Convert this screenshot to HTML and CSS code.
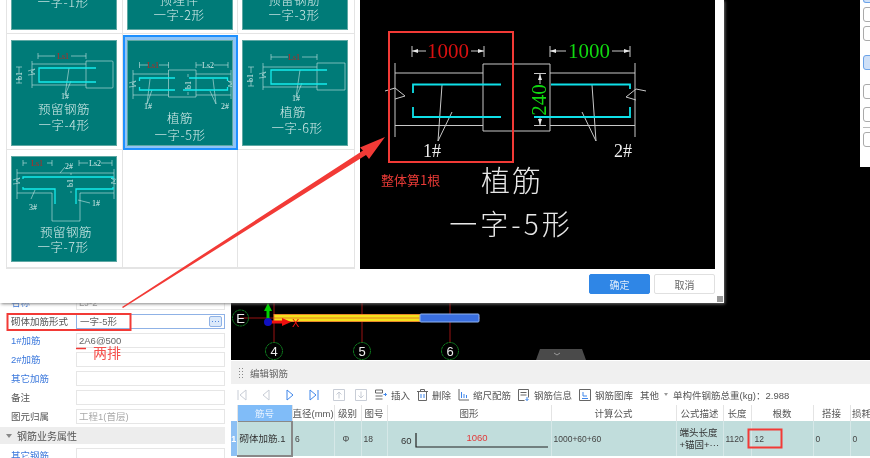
FILE: index.html
```html
<!DOCTYPE html>
<html lang="zh-CN">
<head>
    <meta charset="UTF-8">
    <title>编辑钢筋</title>
    <link rel="stylesheet" href="styles.css">
</head>
<body>
<div class="app">
    <!-- property list on the left -->
    <aside class="props">
        <div class="prop"><span class="prop-label link">名称</span><div class="prop-value">LJ-2</div></div>
        <div class="prop"><span class="prop-label">砌体加筋形式</span><div class="prop-value active">一字-5形<span class="more">···</span></div></div>
        <div class="prop"><span class="prop-label link">1#加筋</span><div class="prop-value dark">2A6@500</div></div>
        <div class="prop"><span class="prop-label link">2#加筋</span><div class="prop-value"></div></div>
        <div class="prop"><span class="prop-label link">其它加筋</span><div class="prop-value"></div></div>
        <div class="prop"><span class="prop-label">备注</span><div class="prop-value"></div></div>
        <div class="prop"><span class="prop-label">图元归属</span><div class="prop-value muted">工程1(首层)</div></div>
        <div class="prop-section"><span class="caret"></span>钢筋业务属性</div>
        <div class="prop"><span class="prop-label link">其它钢筋</span><div class="prop-value"></div></div>
    </aside>

    <main class="work">
        <div class="canvas">
            <svg class="canvas-svg" width="639" height="360" viewBox="0 0 639 360">
                <g class="grid-line">
                    <path d="M43 303V343M131 303V343M219 303V343M9 318H249"/>
                </g>
                <rect x="43" y="314.500" width="146" height="7" fill="#f4e21c" stroke="#e8862a" stroke-width="1"/>
                <path d="M43 318H189" stroke="#e0402a" stroke-width=".6"/>
                <rect x="189" y="314" width="59" height="8" rx="1" fill="#3a6fe0" stroke="#8fb4f2" stroke-width="1"/>
                <g class="axis-ring">
                    <circle cx="9.500" cy="318" r="8"/>
                    <circle cx="43" cy="351" r="8.500"/>
                    <circle cx="131" cy="351" r="8.500"/>
                    <circle cx="219" cy="351" r="8.500"/>
                </g>
                <g class="axis-label">
                    <text x="9.500" y="323">E</text>
                    <text x="43" y="356">4</text>
                    <text x="131" y="356">5</text>
                    <text x="219" y="356">6</text>
                </g>
                <path d="M37 322V310" stroke="#00d000" stroke-width="3"/>
                <path d="M37 303l-4 8h8z" fill="#00d000"/>
                <path d="M37 322H52" stroke="#f01010" stroke-width="3"/>
                <path d="M60 322l-9-4v8z" fill="#f01010"/>
                <circle cx="37" cy="322" r="4" fill="#1010c0"/>
                <text class="axis-x" x="61" y="327">X</text>
                <path d="M305 360l4-11h42l4 11z" fill="#4a4a4a"/>
                <path d="M323 353l3 2 3-2" fill="none" stroke="#999" stroke-width="1"/>
            </svg>
            <div class="side-tools">
                <span class="tool fill cut"></span>
                <span class="tool near"></span>
                <span class="tool near"></span>
                <span class="tool fill far"></span>
                <span class="tool far"></span>
                <span class="tool mid"></span>
                <span class="sep"></span>
                <span class="tool near"></span>
            </div>
        </div>

        <section class="rebar">
            <div class="rebar-title"><span class="grip"></span>编辑钢筋</div>
            <div class="toolbar">
                <svg class="nav" width="10" height="12" viewBox="0 0 10 12"><path d="M1 1V11M9 1L3 6l6 5z"/></svg>
                <svg class="nav" width="10" height="12" viewBox="0 0 10 12"><path d="M8 1L2 6l6 5z"/></svg>
                <svg class="nav blue" width="10" height="12" viewBox="0 0 10 12"><path d="M2 1l6 5-6 5z"/></svg>
                <svg class="nav blue" width="10" height="12" viewBox="0 0 10 12"><path d="M9 1V11M1 1l6 5-6 5z"/></svg>
                <svg class="nav box" width="12" height="12" viewBox="0 0 12 12"><path d="M.5.5h11v11H.5zM6 9.500V3M3.500 5.500L6 3l2.500 2.500"/></svg>
                <svg class="nav box last" width="12" height="12" viewBox="0 0 12 12"><path d="M.5.5h11v11H.5zM6 2.500V9M3.500 6.500L6 9l2.500-2.500"/></svg>
                <span class="action"><svg class="ico" width="12" height="11" viewBox="0 0 12 11"><path d="M.5 1h7v3h-7zM.5 7h7M.5 10h7"/><path class="accent" d="M8.500 5.500h3M10 4l1.500 1.500L10 7"/></svg>插入</span>
                <span class="action"><svg class="ico" width="11" height="12" viewBox="0 0 11 12"><path d="M0 2.500h11M3.500 2.500V.5h4v2M1.500 2.500v9h8v-9"/><path class="accent" d="M4 5v4M7 5v4"/></svg>删除</span>
                <span class="action"><svg class="ico" width="11" height="12" viewBox="0 0 11 12"><path d="M1 0v11h10"/><path class="accent" d="M3.500 3v6M6 5v4M8.500 6v3"/></svg>缩尺配筋</span>
                <span class="action"><svg class="ico" width="12" height="12" viewBox="0 0 12 12"><path d="M.5.5h10v8M.5.500v11h6M2.500 3.500h6M2.500 6h6"/><path class="accent" d="M9 8v3.500M7.500 10L9 11.500 10.500 10"/></svg>钢筋信息</span>
                <span class="action"><svg class="ico" width="12" height="12" viewBox="0 0 12 12"><path d="M.5.5h11v11H.5z"/><path class="accent" d="M3 9.500h6M4 3v4h4"/></svg>钢筋图库</span>
                <span class="action other">其他<span class="drop"></span></span>
                <span class="weight">单构件钢筋总重(kg)：2.988</span>
            </div>
            <table class="rebar-table">
                <colgroup>
                    <col class="c-idx"><col class="c-name"><col class="c-dia"><col class="c-grade"><col class="c-fig">
                    <col class="c-shape"><col class="c-calc"><col class="c-desc"><col class="c-len"><col class="c-num">
                    <col class="c-lap"><col class="c-loss">
                </colgroup>
                <tr class="head">
                    <th></th><th class="sel">筋号</th><th>直径(mm)</th><th>级别</th><th>图号</th>
                    <th>图形</th><th>计算公式</th><th>公式描述</th><th>长度</th><th>根数</th><th>搭接</th><th>损耗</th>
                </tr>
                <tr class="row">
                    <td class="idx">1</td>
                    <td class="name">砌体加筋.1</td>
                    <td>6</td>
                    <td class="mid">Φ</td>
                    <td>18</td>
                    <td class="shape">
                        <svg width="164" height="34" viewBox="0 0 164 34">
                            <text class="shape-len" x="13" y="22">60</text>
                            <path d="M28 11V25H160" fill="none" stroke="#222" stroke-width="1.200"/>
                            <text class="shape-red" x="89" y="19">1060</text>
                        </svg>
                    </td>
                    <td>1000+60+60</td>
                    <td class="desc">端头长度<br>+锚固+···</td>
                    <td>1120</td>
                    <td class="num">12</td>
                    <td>0</td>
                    <td>0</td>
                </tr>
            </table>
        </section>
    </main>

    <!-- picture picker dialog, sits over the app -->
    <div class="dialog">
        <div class="dialog-body">
            <div class="thumbs-wrap">
                <div class="thumbs">
                    <div class="cell"><svg class="thumb" viewBox="0 0 106 106">
                        <text class="t-cn" x="52" y="83">一字-1形</text>
                    </svg></div>
                    <div class="cell"><svg class="thumb" viewBox="0 0 106 106">
                        <text class="t-cn" x="52" y="81">预埋件</text>
                        <text class="t-cn" x="52" y="96">一字-2形</text>
                    </svg></div>
                    <div class="cell"><svg class="thumb" viewBox="0 0 106 106">
                        <text class="t-cn" x="52" y="81">预留钢筋</text>
                        <text class="t-cn" x="52" y="96">一字-3形</text>
                    </svg></div>

                    <div class="cell"><svg class="thumb" viewBox="0 0 106 106">
                        <path class="t-line" d="M27 13V19M75 13V19M27 16H44M60 16H75M21 21V48M21 24H75M21 45H75M75 21H101q1 0 1 1V47q0 1-1 1H75zM17 31l7-2-4 3 4 2-7 1M5 27H11M5 43H11M8 27V33M8 38V43M58 28l-4 27 6-14"/>
                        <path class="t-bar" d="M85 28H28V42H85"/>
                        <text class="t-ls red" x="52" y="19">Ls1</text>
                        <text class="t-ls" x="54" y="59">1#</text>
                        <text class="t-ls" transform="translate(11 36) rotate(-90)" x="0" y="0">b1</text>
                        <text class="t-cn" x="53" y="74">预留钢筋</text>
                        <text class="t-cn" x="53" y="90">一字-4形</text>
                    </svg></div>
                    <div class="cell selected"><svg class="thumb" viewBox="0 0 106 106">
                        <path class="t-line" d="M12.500 22V28M41.500 22V28M12.500 25H21M32 25H41.500M69 22V28M101 22V28M69 25H75M87 25H101M6 30V59M104 30V59M6 34H41.500M6 55H41.500M69 34H104M69 55H104M41.500 30H69V57H41.500zM2 43l7-2-4 3 4 2-7 1M108 43l-7-2 4 3-4 2 7 1M61 34V37M61 52V55M23 39l-3 25 5-14M86 39l3 25-6-13"/>
                        <path class="t-bar" d="M48 38H12.500V41M12.500 47V50H48M62 38H100.500V41M56 50H100.500V47"/>
                        <text class="t-ls red" x="26" y="28">Ls1</text>
                        <text class="t-ls" x="81" y="28">Ls2</text>
                        <text class="t-ls" x="21" y="69">1#</text>
                        <text class="t-ls" x="98" y="69">2#</text>
                        <text class="t-ls" transform="translate(64 45) rotate(-90)" x="0" y="0">b1</text>
                        <text class="t-cn" x="53" y="83">植筋</text>
                        <text class="t-cn" x="53" y="100">一字-5形</text>
                    </svg></div>
                    <div class="cell"><svg class="thumb" viewBox="0 0 106 106">
                        <path class="t-line" d="M29 14V20M75 14V20M29 17H46M60 17H75M21 23V50M21 27H75M21 47H75M75 23H103V50H75zM17 34l7-2-4 3 4 2-7 1M6 27H12M6 46H12M9 27V33M9 40V46M58 30l-4 27 6-14"/>
                        <path class="t-bar" d="M85 30H29V44H85"/>
                        <text class="t-ls red" x="52" y="20">Ls1</text>
                        <text class="t-ls" x="54" y="61">1#</text>
                        <text class="t-ls" transform="translate(11 38) rotate(-90)" x="0" y="0">b1</text>
                        <text class="t-cn" x="51" y="77">植筋</text>
                        <text class="t-cn" x="55" y="93">一字-6形</text>
                    </svg></div>

                    <div class="cell"><svg class="thumb" viewBox="0 0 106 106">
                        <path class="t-line" d="M12 4V10M41 4V10M12 7H16M36 7H41M68 4V10M101 4V10M68 7H77M90 7H101M6 13V43M103 13V43M6 17H103M6 37H41V65H69V37H103M2 24l7-2-4 3 4 2-7 1M107 24l-7-2 4 3-4 2 7 1M60 17V19M60 35V37M49 17l5-6M24 34l-4 9M67 44l12 3"/>
                        <path class="t-bar" d="M12 23V21H102V23M12 31V33H44V48M102 31V33H65V48"/>
                        <text class="t-ls red" x="26" y="10">Ls1</text>
                        <text class="t-ls" x="84" y="10">Ls2</text>
                        <text class="t-ls" x="58" y="13">2#</text>
                        <text class="t-ls" x="22" y="54">3#</text>
                        <text class="t-ls" x="85" y="50">1#</text>
                        <text class="t-ls" transform="translate(62 27) rotate(-90)" x="0" y="0">b1</text>
                        <text class="t-cn" x="55" y="81">预留钢筋</text>
                        <text class="t-cn" x="52" y="96">一字-7形</text>
                    </svg></div>
                    <div class="cell"></div>
                    <div class="cell"></div>
                </div>
            </div>
            <svg class="preview" width="355" height="269" viewBox="0 0 355 269">
                <g class="p-line">
                    <path d="M52 46V57M124 46V57M52 51H66M111 51H124M190 46V57M270 46V57M190 51H206M252 51H270"/>
                    <path d="M35 63V137M35 73H123M35 125.500H123M123 64H190V131H123zM275 63V137M190 73H275M190 125.500H275"/>
                    <path d="M25 91l10-3 10 8-10 3M286 91l-10-2-10 8 10 3"/>
                    <path d="M174 73.500H186M174 125.500H186M180 74V84M180 116V125"/>
                    <path d="M82 85L78 141 92 112M232 85L236 141 222 112"/>
                </g>
                <path class="p-head" d="M52 51l6-2v4zM124 51l-6-2v4zM190 51l6-2v4zM270 51l-6-2v4zM180 74l-2 6h4zM180 125l-2-6h4z"/>
                <path class="p-bar" d="M141 84.500H53V93M53 107V117H141M191 84.500H270V89M174 117H270V107"/>
                <text class="p-num red" x="88" y="58">1000</text>
                <text class="p-num green" x="229" y="58">1000</text>
                <text class="p-num green" transform="translate(186 100) rotate(-90)" x="0" y="0">240</text>
                <text class="p-mark" x="72" y="157">1#</text>
                <text class="p-mark" x="263" y="157">2#</text>
                <text class="p-title" x="152" y="192">植筋</text>
                <text class="p-sub" x="151" y="235">一字-5形</text>
            </svg>
        </div>
        <div class="dialog-foot">
            <button class="btn primary">确定</button>
            <button class="btn">取消</button>
        </div>
        <span class="resize"></span>
    </div>

    <!-- red marks someone drew on the screenshot -->
    <svg class="marks" width="870" height="458" viewBox="0 0 870 458">
        <path d="M122 307L363 150.500 360 147.500 385 137 369 159 366 155 123 308z" fill="#f23a36"/>
        <rect x="389" y="32" width="124" height="130" class="mark-box"/>
        <rect x="7.500" y="314" width="123" height="16" class="mark-box"/>
        <rect x="748.500" y="429.500" width="33" height="18" class="mark-box"/>
        <path d="M76 348.500H86" stroke="#f23a36" stroke-width="1.500"/>
        <text class="mark-a" x="381" y="185">整体算1根</text>
        <text class="mark-b" x="93" y="358">两排</text>
    </svg>
</div>
</body>
</html>
```
FILE: styles.css
```css
* {
    box-sizing: border-box;
}

html, body {
    margin: 0;
    height: 100%;
    overflow: hidden;
}

body {
    font-family: "Liberation Sans", "Noto Sans CJK SC", sans-serif;
    font-size: 9.500px;
    color: #555;
    background: #000;
}

.app {
    position: relative;
    display: flex;
    width: 870px;
    height: 458px;
    overflow: hidden;
    background: #fff;
    filter: blur(0.45px);
}

/* left property list */
.props {
    width: 231px;
    flex-shrink: 0;
    padding: 295px 6px 0 0;
    display: flex;
    flex-direction: column;
    gap: 4px;
    background: #fff;
}

.prop {
    display: flex;
    height: 15px;
    flex-shrink: 0;
    padding-left: 11px;
    align-items: center;
}

.prop-label {
    width: 65px;
    flex-shrink: 0;
    white-space: nowrap;
    line-height: 15px;
}

.prop-label.link {
    color: #3b78dc;
}

.prop-value {
    flex: 1;
    height: 15px;
    border: 1px solid #e6e6e6;
    padding-left: 2px;
    line-height: 13px;
    color: #999;
    position: relative;
}

.prop-value.dark {
    color: #666;
}

.prop-value.muted {
    color: #aaa;
}

.prop-value.active {
    border-color: #8fb2e6;
    padding-left: 3px;
    color: #666;
}

.more {
    position: absolute;
    right: 2px;
    top: 1px;
    width: 13px;
    height: 11px;
    border: 1px solid #8fb2e6;
    border-radius: 2px;
    background: #dbe9fa;
    color: #3b78dc;
    font-size: 9px;
    line-height: 8px;
    text-align: center;
}

.prop-section {
    display: flex;
    align-items: center;
    height: 17px;
    margin: -1px 0 0;
    padding-left: 6px;
    background: #ededed;
    color: #555;
    font-size: 10px;
    flex-shrink: 0;
}

.caret {
    width: 0;
    height: 0;
    margin-right: 5px;
    border: 3px solid transparent;
    border-top: 4px solid #888;
    border-bottom: 0;
}

/* right column: canvas and rebar table */
.work {
    flex: 1;
    min-width: 0;
    display: flex;
    flex-direction: column;
}

.canvas {
    position: relative;
    height: 361px;
    flex-shrink: 0;
    background: #000;
    border-bottom: 1px solid #fff;
}

.canvas-svg {
    display: block;
}

.grid-line path {
    fill: none;
    stroke: #c01818;
    stroke-width: 0.8;
}

.axis-ring circle {
    fill: none;
    stroke: #0e7a1e;
    stroke-width: 1;
    stroke-dasharray: 3 0.5;
}

.axis-label text {
    fill: #eee;
    font-size: 13px;
    text-anchor: middle;
}

.axis-x {
    fill: #f01010;
    font-size: 11px;
}

.side-tools {
    position: absolute;
    top: 0;
    right: 0;
    width: 10px;
    height: 167px;
    padding-left: 3px;
    display: flex;
    flex-direction: column;
    overflow: hidden;
    background: #fff;
}

.tool {
    width: 16px;
    height: 15px;
    flex-shrink: 0;
    border: 1px solid #aaa;
    border-radius: 3px;
}

.tool.fill {
    background: #cfe0f7;
    border-color: #6ba3e8;
}

.tool.cut {
    height: 3px;
    border-radius: 0 0 3px 3px;
    border-top: 0;
}

.tool.near {
    margin-top: 4px;
}

.tool.mid {
    margin-top: 8px;
}

.tool.far {
    margin-top: 14px;
}

.sep {
    height: 1px;
    margin-top: 5px;
    background: #bbb;
    flex-shrink: 0;
}

.rebar {
    flex: 1;
    min-height: 0;
    display: flex;
    flex-direction: column;
}

.rebar-title {
    display: flex;
    align-items: center;
    height: 23px;
    flex-shrink: 0;
    padding-left: 7px;
    background: #f0f0f0;
    color: #666;
}

.grip {
    width: 5px;
    height: 11px;
    margin-right: 7px;
    background: radial-gradient(circle, #888 0.8px, transparent 1px) 0 0 / 3px 3px;
}

.toolbar {
    display: flex;
    align-items: center;
    height: 21px;
    flex-shrink: 0;
    padding-left: 6px;
    color: #555;
    white-space: nowrap;
}

.nav {
    flex-shrink: 0;
    margin-right: 14px;
    fill: none;
    stroke: #c8cdd6;
    stroke-width: 1;
}

.nav.blue {
    stroke: #3f86ea;
}

.nav.box {
    margin-right: 10px;
}

.nav.box.last {
    margin-right: 8px;
}

.action {
    display: flex;
    align-items: center;
    gap: 4px;
    margin-right: 7px;
}

.ico {
    flex-shrink: 0;
    fill: none;
    stroke: #666;
    stroke-width: 1;
}

.ico .accent {
    stroke: #3f86ea;
}

.other {
    gap: 5px;
    margin-right: 5px;
}

.drop {
    width: 0;
    height: 0;
    border: 2.500px solid transparent;
    border-top: 3px solid #999;
    border-bottom: 0;
}

.rebar-table {
    width: 642px;
    table-layout: fixed;
    border-collapse: collapse;
    color: #555;
}

.c-idx { width: 6px; }
.c-name { width: 55px; }
.c-dia { width: 42px; }
.c-grade { width: 27px; }
.c-fig { width: 26px; }
.c-shape { width: 164px; }
.c-calc { width: 125px; }
.c-desc { width: 47px; }
.c-len { width: 28px; }
.c-num { width: 62px; }
.c-lap { width: 37px; }
.c-loss { width: 23px; }

.head th {
    height: 16px;
    padding: 0;
    font-weight: normal;
    white-space: nowrap;
    overflow: hidden;
    border-right: 1px solid #e4e4e4;
}

.head .sel {
    background: #80bcf8;
    color: #e8f3ff;
}

.row td {
    height: 35px;
    padding: 0 0 0 2px;
    background: #c1dddc;
    border-right: 1px solid #d6e8e8;
    overflow: hidden;
    white-space: nowrap;
    color: #444;
    font-size: 8.500px;
}

.row .idx {
    padding: 0;
    background: #8cc0f4;
    color: #fff;
    font-weight: bold;
    font-size: 9px;
    text-align: center;
}

.row .name {
    border: 1px solid #888;
    border-width: 1px 2px 2px 1px;
    color: #333;
    font-size: 9.500px;
}

.row .mid {
    padding-left: 8px;
}

.row .shape {
    padding: 0;
}

.shape svg {
    display: block;
}

.shape-len {
    font-size: 9.500px;
    fill: #333;
}

.shape-red {
    font-size: 9.500px;
    fill: #e23a3a;
    text-anchor: middle;
}

.row .desc {
    padding-left: 3px;
    line-height: 12px;
    color: #333;
    font-size: 9.500px;
}

.row .num {
    padding-left: 3px;
}

/* dialog */
.dialog {
    position: absolute;
    top: 0;
    left: 0;
    width: 724px;
    height: 303px;
    background: #fff;
    box-shadow: 1px 1px 3px rgba(120, 120, 120, 0.9);
}

.dialog-body {
    display: flex;
    gap: 5px;
    height: 269px;
    padding-left: 6px;
}

.thumbs-wrap {
    width: 349px;
    height: 269px;
    overflow: hidden;
    flex-shrink: 0;
}

.thumbs {
    display: grid;
    grid-template-columns: repeat(3, 1fr);
    grid-template-rows: 116px 116px 118px;
    margin-top: -82px;
    border: 1px solid #e4e4e4;
    border-top: 0;
}

.cell {
    padding: 6px 4px 4px;
    border-right: 1px solid #e4e4e4;
    border-bottom: 1px solid #e4e4e4;
}

.cell:nth-child(3n) {
    border-right: 0;
}

.cell.selected {
    margin: 1px 0 0 0;
    padding: 3px 2px 2px;
    border: 2px solid #1e90ff;
    background: #8fc4f5;
}

.thumb {
    display: block;
    width: 106px;
    height: 106px;
    background: #007b78;
    outline: 1px solid #5fa8a4;
    outline-offset: -1px;
}

.t-line {
    fill: none;
    stroke: #c8e6e4;
    stroke-width: 0.6;
}

.t-bar {
    fill: none;
    stroke: #14ecec;
    stroke-width: 1.300;
}

.t-ls {
    fill: #d5ecea;
    font-family: "Liberation Serif", serif;
    font-size: 8px;
    text-anchor: middle;
}

.t-ls.red {
    fill: #c8201c;
}

.t-cn {
    fill: #d5ecea;
    font-family: "Noto Sans CJK SC", sans-serif;
    font-size: 12.500px;
    font-weight: 300;
    letter-spacing: 0.5px;
    text-anchor: middle;
}

.preview {
    display: block;
    flex-shrink: 0;
    background: #000;
}

.p-line {
    fill: none;
    stroke: #c8c8c8;
    stroke-width: 1;
}

.p-head {
    fill: #e8e8e8;
}

.p-bar {
    fill: none;
    stroke: #0fe0e8;
    stroke-width: 1.800;
}

.p-num {
    font-family: "Liberation Serif", serif;
    font-size: 21px;
    text-anchor: middle;
}

.p-num.red {
    fill: #d81010;
}

.p-num.green {
    fill: #10d810;
}

.p-mark {
    fill: #eee;
    font-family: "Liberation Serif", serif;
    font-size: 18px;
    text-anchor: middle;
}

.p-title,
.p-sub {
    fill: #e8e8e8;
    font-family: "Noto Sans CJK SC", sans-serif;
    font-weight: 300;
    text-anchor: middle;
}

.p-title {
    font-size: 29px;
    letter-spacing: 2px;
}

.p-sub {
    font-size: 28px;
    letter-spacing: 3px;
}

.dialog-foot {
    display: flex;
    justify-content: flex-end;
    gap: 4px;
    padding: 5px 9px 0 0;
}

.btn {
    width: 61px;
    height: 20px;
    padding: 0;
    border: 1px solid #e0e0e0;
    border-radius: 2px;
    background: #fff;
    color: #666;
    font-family: inherit;
    font-size: 10px;
}

.btn.primary {
    border-color: #2f86e6;
    background: #2f86e6;
    color: #dcebfb;
}

.resize {
    position: absolute;
    right: 1px;
    bottom: 1px;
    width: 6px;
    height: 6px;
    background: radial-gradient(circle, #999 0.8px, transparent 1px) 0 0 / 2px 2px;
}

/* annotations */
.marks {
    position: absolute;
    top: 0;
    left: 0;
    pointer-events: none;
}

.mark-box {
    fill: none;
    stroke: #f23a36;
    stroke-width: 2;
}

.mark-a {
    fill: #e83a36;
    font-family: "Noto Sans CJK SC", sans-serif;
    font-size: 13px;
}

.mark-b {
    fill: #f5504c;
    font-family: "Noto Sans CJK SC", sans-serif;
    font-size: 14px;
}
```
